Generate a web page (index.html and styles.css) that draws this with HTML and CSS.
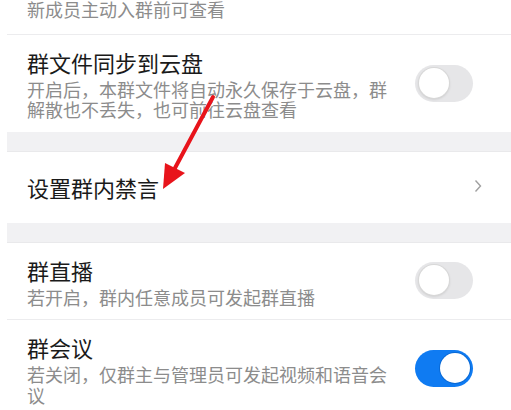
FILE: index.html
```html
<!DOCTYPE html>
<html lang="zh-CN">
<head>
  <meta charset="UTF-8">
  <meta name="viewport" content="width=device-width, initial-scale=1.0">
  <title>群设置</title>
  <link rel="stylesheet" href="styles.css">
</head>
<body>
  <div class="settings">
    <div class="group">
      <div class="row row-top">
        <div class="text">
          <div class="desc">新成员主动入群前可查看</div>
        </div>
      </div>
      <div class="row">
        <div class="text">
          <div class="title">群文件同步到云盘</div>
          <div class="desc">开启后，本群文件将自动永久保存于云盘，群解散也不丢失，也可前往云盘查看</div>
        </div>
        <div class="switch"><span class="knob"></span></div>
      </div>
    </div>

    <div class="group">
      <div class="row row-link">
        <div class="text">
          <div class="title">设置群内禁言</div>
        </div>
        <svg class="chevron" width="8" height="14" viewBox="0 0 8 14">
          <path d="M1.5 1.5 L6.5 7 L1.5 12.5" fill="none" stroke="#a0a0a0" stroke-width="1.4"/>
        </svg>
      </div>
    </div>

    <div class="group">
      <div class="row">
        <div class="text">
          <div class="title">群直播</div>
          <div class="desc">若开启，群内任意成员可发起群直播</div>
        </div>
        <div class="switch"><span class="knob"></span></div>
      </div>
      <div class="row">
        <div class="text">
          <div class="title">群会议</div>
          <div class="desc">若关闭，仅群主与管理员可发起视频和语音会议</div>
        </div>
        <div class="switch on"><span class="knob"></span></div>
      </div>
    </div>
  </div>

  <svg class="arrow" width="511" height="410" viewBox="0 0 511 410">
    <line x1="213" y1="97" x2="175" y2="168" stroke="#e8141b" stroke-width="4" stroke-linecap="round"/>
    <polygon points="163,189 165,163 185,173" fill="#e8141b"/>
  </svg>
</body>
</html>
```

FILE: styles.css
```css
body {
  margin: 0;
  background: #fff;
  font-family: "Noto Sans CJK SC", "Noto Sans", sans-serif;
  overflow: hidden;
}

.settings {
  margin-left: 7px;
  background: #f1f1f3;
}

.group {
  background: #fff;
  border-top: 1px solid #e9e9eb;
}

.group + .group {
  margin-top: 19px;
}

.group:first-child {
  border-top: none;
}

.row {
  display: flex;
  align-items: center;
  padding: 12px 38px 12px 20px;
  border-top: 1px solid #ececee;
}

.row:first-child {
  border-top: none;
}

.row-top {
  margin-top: -1px;
  padding-top: 0;
  padding-bottom: 14px;
}

.row-link {
  height: 71px;
  padding-top: 0;
  padding-bottom: 0;
  box-sizing: border-box;
}

.text {
  flex: 1;
}

.title {
  font-size: 22px;
  line-height: 30px;
  color: #1a1a1a;
}

.desc {
  width: 362px;
  margin-top: 2px;
  font-size: 18px;
  line-height: 20.5px;
  color: #8c8c8c;
}

.row-top .desc {
  margin-top: 0;
}

.chevron {
  margin-right: -9px;
  margin-top: -2px;
}

.switch {
  position: relative;
  width: 58px;
  height: 37px;
  border-radius: 19px;
  background: #e6e6e8;
  flex-shrink: 0;
}

.knob {
  position: absolute;
  left: 4px;
  top: 3px;
  width: 30px;
  height: 30px;
  border-radius: 50%;
  background: #fff;
  box-shadow: 0 0 0 1px #d8d8d8, 0 1px 3px rgba(0, 0, 0, 0.18);
}

.switch.on {
  background: #0f7bf2;
}

.switch.on .knob {
  left: 25px;
  box-shadow: 0 0 0 1px #0a6ad6;
}

.arrow {
  position: absolute;
  left: 0;
  top: 0;
  pointer-events: none;
}
```
